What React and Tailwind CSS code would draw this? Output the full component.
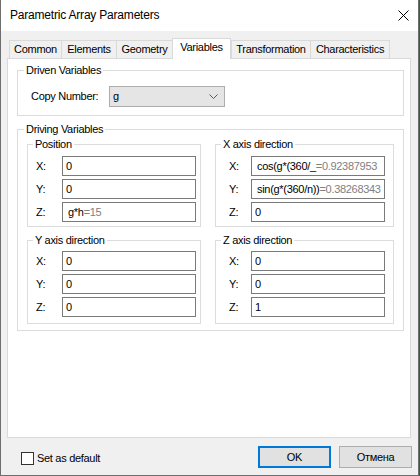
import React from 'react'

const tabs = [
  { name: 'Common', w: 'w-[52px]' },
  { name: 'Elements', w: 'w-[55px]' },
  { name: 'Geometry', w: 'w-[56px]' },
  { name: 'Variables', w: 'w-[59px]', active: true },
  { name: 'Transformation', w: 'w-[79px]' },
  { name: 'Characteristics', w: 'w-[80px]', last: true },
]

function Field({ label, value, hint, formula }) {
  return (
    <div className="flex items-center">
      <span className="w-[34px] pl-[8px] shrink-0">{label}</span>
      <div
        className={`w-[134px] h-[20px] border border-[#7a7a7a] bg-white flex items-center overflow-hidden whitespace-nowrap ${formula ? 'pl-[5px]' : 'pl-[3px]'}`}
      >
        <span className="text-black">{value}</span>
        {hint && <span className="text-[#808080]">{hint}</span>}
      </div>
    </div>
  )
}

function RightField({ label, value, hint, formula }) {
  return (
    <div className="flex items-center">
      <span className="w-[35px] pl-[13px] shrink-0">{label}</span>
      <div
        className={`w-[134px] h-[20px] border border-[#7a7a7a] bg-white flex items-center overflow-hidden whitespace-nowrap ${formula ? 'pl-[5px]' : 'pl-[3px]'}`}
      >
        <span className="text-black">{value}</span>
        {hint && <span className="text-[#808080]">{hint}</span>}
      </div>
    </div>
  )
}

export default function App() {
  return (
    <div className="w-[420px] h-[476px] flex bg-[#3b5b3b] font-['Liberation_Sans',Arial,sans-serif] text-[11px] tracking-[-0.3px] text-black leading-[13px]">
      <div className="w-[419px] h-[476px] flex flex-col border-l border-r border-b border-[#6e6e6e] bg-[#f0f0f0]">
        {/* --- TITLE BAR --- */}
        <div className="h-[31px] bg-white flex items-center justify-between pl-[9px] pr-[9px]">
          <span className="text-[12px] tracking-[-0.2px] text-black">Parametric Array Parameters</span>
          <svg width="11" height="11" viewBox="0 0 11 11">
            <path d="M0.5 0.5 L10.5 10.5 M10.5 0.5 L0.5 10.5" stroke="#000" strokeWidth="1" />
          </svg>
        </div>

        {/* --- BODY --- */}
        <div className="flex-1 flex flex-col pt-[7px] px-[6px]">
          {/* tabs */}
          <div className="flex items-end h-[20px] pl-[2px] relative z-10">
            {tabs.map((t) =>
              t.active ? (
                <div
                  key={t.name}
                  className={`${t.w} h-[21px] -mb-[1px] bg-white border-l border-t border-r border-[#d9d9d9] flex items-center justify-center pb-[3px]`}
                >
                  {t.name}
                </div>
              ) : (
                <div
                  key={t.name}
                  className={`${t.w} h-[18px] border-t border-l border-[#d9d9d9] ${t.last ? 'border-r' : ''} flex items-center justify-center`}
                >
                  {t.name}
                </div>
              )
            )}
          </div>

          {/* panel */}
          <div className="w-[404px] h-[380px] border border-[#d9d9d9] bg-white pl-[9px] pt-[5px]">
            <fieldset className="w-[387px] border border-[#dcdcdc]">
              <legend className="ml-[6px] px-[2px]">Driven Variables</legend>
              <div className="flex items-center mt-[9px] mb-[8px] pl-[13px]">
                <span className="w-[78px] shrink-0">Copy Number:</span>
                <div className="w-[116px] h-[21px] bg-[#e5e5e5] border border-[#adadad] flex items-center justify-between pl-[3px] pr-[6px]">
                  <span>g</span>
                  <svg width="9" height="5" viewBox="0 0 9 5">
                    <path d="M0.5 0.5 L4.5 4.5 L8.5 0.5" fill="none" stroke="#5a5a5a" strokeWidth="1" />
                  </svg>
                </div>
              </div>
            </fieldset>

            <fieldset className="w-[387px] border border-[#dcdcdc] mt-[7px]">
              <legend className="ml-[6px] px-[2px]">Driving Variables</legend>
              <div className="grid grid-cols-[174px_179px] gap-x-[14px] px-[9px] mt-[2px] pb-[6px]">
                <fieldset className="border border-[#dcdcdc] pb-[4px]">
                  <legend className="ml-[5px] px-[2px]">Position</legend>
                  <div className="flex flex-col gap-[3px] mt-[5px]">
                    <Field label="X:" value="0" />
                    <Field label="Y:" value="0" />
                    <Field label="Z:" value="g*h" hint="=15" formula />
                  </div>
                </fieldset>
                <fieldset className="border border-[#dcdcdc] pb-[4px]">
                  <legend className="ml-[5px] px-[2px]">X axis direction</legend>
                  <div className="flex flex-col gap-[3px] mt-[5px]">
                    <RightField label="X:" value="cos(g*(360/_" hint="=0.92387953" formula />
                    <RightField label="Y:" value="sin(g*(360/n))" hint="=0.38268343" formula />
                    <RightField label="Z:" value="0" />
                  </div>
                </fieldset>
                <fieldset className="border border-[#dcdcdc] mt-[7px] pb-[6px]">
                  <legend className="ml-[5px] px-[2px]">Y axis direction</legend>
                  <div className="flex flex-col gap-[3px] mt-[4px]">
                    <Field label="X:" value="0" />
                    <Field label="Y:" value="0" />
                    <Field label="Z:" value="0" />
                  </div>
                </fieldset>
                <fieldset className="border border-[#dcdcdc] mt-[7px] pb-[6px]">
                  <legend className="ml-[5px] px-[2px]">Z axis direction</legend>
                  <div className="flex flex-col gap-[3px] mt-[4px]">
                    <RightField label="X:" value="0" />
                    <RightField label="Y:" value="0" />
                    <RightField label="Z:" value="1" />
                  </div>
                </fieldset>
              </div>
            </fieldset>
          </div>

          {/* bottom row */}
          <div className="flex items-start justify-between pl-[14px]">
            <label className="flex items-center gap-[3px] mt-[14px]">
              <span className="w-[13px] h-[13px] border border-[#333333] bg-white" />
              <span>Set as default</span>
            </label>
            <div className="flex gap-[8px] mt-[8px]">
              <button className="w-[73px] h-[22px] bg-[#e1e1e1] border-2 border-[#0078d7] flex items-center justify-center">
                OK
              </button>
              <button className="w-[73px] h-[22px] bg-[#e1e1e1] border border-[#adadad] flex items-center justify-center">
                Отмена
              </button>
            </div>
          </div>
        </div>
      </div>
    </div>
  )
}
